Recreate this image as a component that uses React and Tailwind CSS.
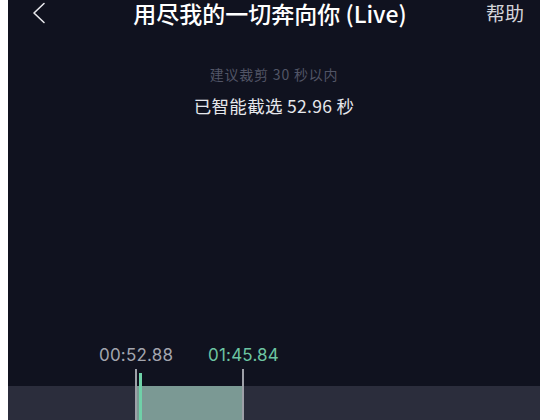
import React from 'react';

const CJK = { fontFamily: '"Noto Sans CJK SC", "Noto Sans", sans-serif' };

// chevron retour, trait fin
function BackIcon() {
    return (
        <svg width="14" height="22" viewBox="0 0 14 22" fill="none">
            <path d="M12 1.5 L2 11 L12 20.5" stroke="#e8e8ec" strokeWidth="1.6" strokeLinecap="round" strokeLinejoin="round" />
        </svg>
    );
}

function Header() {
    return (
        <div className="grid grid-cols-[1fr_auto_1fr] items-center h-[26px]">
            <div className="pl-[24px] flex items-center">
                <BackIcon />
            </div>
            <div className="text-[23px] leading-[26px] font-medium text-white mr-[8px] whitespace-nowrap">
                用尽我的一切奔向你 (Live)
            </div>
            <div className="flex justify-end pr-[16px] text-[19px] leading-[26px] text-[#d4d5da]">
                帮助
            </div>
        </div>
    );
}

function Timeline() {
    return (
        <div className="flex flex-col">
            {/* horodatages début / fin */}
            <div className="flex pl-[91px] text-[17px] leading-[20px] tracking-[0.2px]" style={{ fontFamily: 'Inter, "Noto Sans", sans-serif' }}>
                <span className="w-[109px] text-[#a3a5ae]">00:52.88</span>
                <span className="text-[#6cc4a2]">01:45.84</span>
            </div>
            <div className="relative mt-[4px] h-[51px]">
                <div className="h-[17px]" />
                <div className="flex h-[34px] bg-[#2b2d3c]">
                    <div className="w-[129px]" />
                    <div className="w-[105px] bg-[#7b9994]" />
                    <div className="flex-1" />
                </div>
                {/* poignées */}
                <div className="absolute left-[127px] top-0 bottom-0 w-[2px] bg-[#9ea0a8]" />
                <div className="absolute left-[131px] top-[4px] bottom-0 w-[3px] bg-[#6fd1a8]" />
                <div className="absolute left-[234px] top-0 bottom-0 w-[2px] bg-[#9ea0a8]" />
            </div>
        </div>
    );
}

export default function App() {
    return (
        <div className="w-[540px] h-[420px] flex bg-white overflow-hidden" style={CJK}>
            <div className="w-[8px] bg-white" />
            <div className="flex-1 flex flex-col bg-[#10121f]">
                <Header />
                <div className="mt-[39px] text-center text-[14px] leading-[18px] tracking-[0.8px] text-[#525566]">
                    建议裁剪 30 秒以内
                </div>
                <div className="mt-[13px] text-center text-[17.5px] leading-[20px] tracking-[0.3px] text-[#e6e7ec]">
                    已智能截选 52.96 秒
                </div>
                <div className="flex-1" />
                <Timeline />
            </div>
        </div>
    );
}
